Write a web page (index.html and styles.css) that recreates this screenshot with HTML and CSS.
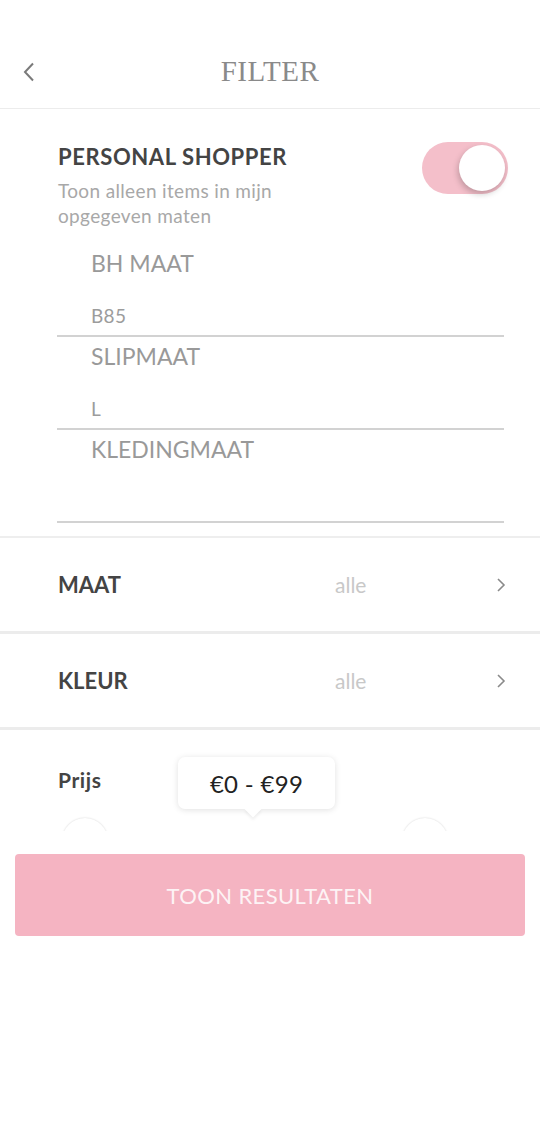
FILE: index.html
```html
<!DOCTYPE html>
<html lang="nl">
<head>
<meta charset="utf-8">
<title>Filter</title>
<link rel="stylesheet" href="styles.css">
</head>
<body>
<div class="screen">
  <header class="topbar">
    <button class="back" aria-label="Terug">
      <svg width="14" height="20" viewBox="0 0 14 20"><path d="M11 1.5 L3 10 L11 18.5" fill="none" stroke="#7a7a7a" stroke-width="2"/></svg>
    </button>
    <h1 class="title">FILTER</h1>
  </header>

  <section class="personal">
    <div class="personal-head">
      <div class="personal-text">
        <h2 class="personal-title">PERSONAL SHOPPER</h2>
        <p class="personal-sub">Toon alleen items in mijn opgegeven maten</p>
      </div>
      <div class="toggle"><span class="knob"></span></div>
    </div>
    <div class="fields">
      <div class="field">
        <div class="field-label">BH MAAT</div>
        <div class="field-value">B85</div>
      </div>
      <div class="field">
        <div class="field-label">SLIPMAAT</div>
        <div class="field-value">L</div>
      </div>
      <div class="field">
        <div class="field-label">KLEDINGMAAT</div>
        <div class="field-value"></div>
      </div>
    </div>
  </section>

  <div class="row">
    <span class="row-label">MAAT</span>
    <span class="row-value">alle</span>
    <svg class="chev" width="10" height="16" viewBox="0 0 10 16"><path d="M2 2 L8 8 L2 14" fill="none" stroke="#8a8a8a" stroke-width="1.6"/></svg>
  </div>
  <div class="row">
    <span class="row-label">KLEUR</span>
    <span class="row-value">alle</span>
    <svg class="chev" width="10" height="16" viewBox="0 0 10 16"><path d="M2 2 L8 8 L2 14" fill="none" stroke="#8a8a8a" stroke-width="1.6"/></svg>
  </div>

  <section class="price">
    <h3 class="price-label">Prijs</h3>
    <div class="tooltip">€0 - €99</div>
    <div class="slider">
      <span class="thumb"></span>
      <span class="thumb"></span>
    </div>
  </section>

  <div class="footer">
    <button class="cta">TOON RESULTATEN</button>
  </div>
</div>
</body>
</html>
```

FILE: styles.css
```css
* { box-sizing: border-box; }
html, body { margin: 0; padding: 0; background: #fff; }
body { font-family: Lato, "Open Sans", Arial, sans-serif; color: #444; }
.screen { width: 540px; min-height: 1140px; background: #fff; }

.topbar {
  height: 109px;
  border-bottom: 1px solid #ececec;
  display: flex;
  align-items: center;
  justify-content: center;
  position: relative;
  padding-top: 34px;
}
.back {
  position: absolute;
  left: 22px;
  top: 62px;
  border: 0;
  background: none;
  padding: 0;
  width: 14px;
  height: 20px;
}
.back svg { display: block; }
.title {
  margin: 0;
  font-family: "Liberation Serif", "Times New Roman", serif;
  font-weight: normal;
  font-size: 29px;
  line-height: 1;
  color: #8a8a8a;
  letter-spacing: 0.5px;
}

.personal { padding: 35px 0 13px 0; border-bottom: 2px solid #eeeeee; }
.personal-head { display: flex; justify-content: space-between; padding: 0 32px 0 58px; }
.personal-title {
  margin: 0;
  font-size: 22px;
  line-height: 26px;
  font-weight: 700;
  color: #444;
  letter-spacing: 0.6px;
}
.personal-sub {
  margin: 8px 0 0;
  width: 250px;
  font-size: 19px;
  line-height: 25px;
  color: #a8a8a8;
  letter-spacing: 0.35px;
}
.toggle {
  margin-top: -2px;
  width: 86px;
  height: 52px;
  border-radius: 26px;
  background: #f4bfca;
  position: relative;
  flex: none;
}
.knob {
  position: absolute;
  right: 3px;
  top: 3px;
  width: 46px;
  height: 46px;
  border-radius: 50%;
  background: #fff;
  box-shadow: -1px 3px 6px rgba(0,0,0,0.22);
}

.fields { margin: 16px 36px 0 57px; }
.field {
  padding: 5px 0 7px 34px;
  border-bottom: 2px solid #d2d2d2;
}
.field-label {
  font-size: 23px;
  line-height: 28px;
  color: #999;
  margin-bottom: 27px;
}
.field-value {
  font-size: 19px;
  line-height: 24px;
  height: 24px;
  color: #9c9c9c;
  letter-spacing: 0.3px;
}

.row {
  height: 96px;
  border-bottom: 3px solid #ececec;
  display: flex;
  align-items: center;
  padding: 0 34px 0 58px;
}
.row-label { font-size: 22px; font-weight: 700; color: #444; width: 277px; }
.row-value { font-size: 21px; color: #c8c8c8; flex: 1; }
.chev { display: block; }

.price {
  height: 101px;
  overflow: hidden;
  position: relative;
  padding: 38px 0 0 58px;
}
.price-label { margin: 0; font-size: 21px; line-height: 24px; font-weight: 700; color: #444; letter-spacing: 0.6px; }
.tooltip {
  position: absolute;
  left: 178px;
  top: 27px;
  width: 157px;
  height: 52px;
  background: #fff;
  border-radius: 7px;
  box-shadow: 0 1px 6px rgba(0,0,0,0.12);
  font-size: 24px;
  color: #222;
  letter-spacing: 0.3px;
  display: flex;
  align-items: center;
  justify-content: center;
}
.tooltip::after {
  content: "";
  position: absolute;
  left: 69px;
  bottom: -6px;
  width: 12px;
  height: 12px;
  background: #fff;
  transform: rotate(45deg);
  box-shadow: 2px 2px 3px rgba(0,0,0,0.06);
}
.slider {
  display: flex;
  justify-content: space-between;
  margin: 26px 92px 0 4px;
}
.thumb {
  width: 46px;
  height: 46px;
  border-radius: 50%;
  background: #fff;
  box-shadow: 0 0 2px rgba(0,0,0,0.18);
}

.footer { padding: 23px 15px; }
.cta {
  width: 510px;
  height: 82px;
  border: 0;
  border-radius: 4px;
  background: #f5b4c2;
  color: #fdf3f5;
  font-family: Lato, "Open Sans", Arial, sans-serif;
  font-size: 22px;
  letter-spacing: 0.4px;
}
```
